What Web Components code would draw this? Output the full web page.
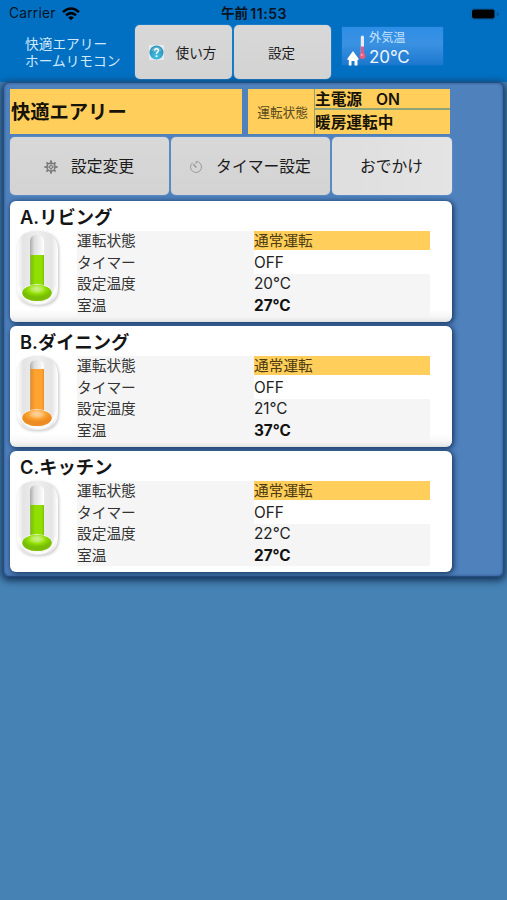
<!DOCTYPE html>
<html lang="ja">
<head>
<meta charset="utf-8">
<title>快適エアリー ホームリモコン</title>
<style>
html,body{margin:0;height:100%}
body{background:#4682b4;font-family:Inter,"Noto Sans CJK JP",sans-serif;color:#111;overflow:hidden}
</style>
</head>
<body>
<home-remote></home-remote>
<script>
const define = (name, html) => customElements.define(name, class extends HTMLElement {
  connectedCallback() {
    if (this.shadowRoot) return;
    const t = document.createElement('template');
    t.innerHTML = typeof html === 'function' ? html(this) : html;
    this.attachShadow({mode: 'open'}).append(t.content.cloneNode(true));
  }
});

define('status-bar', `<style>
:host{display:grid;grid-template-columns:1fr auto 1fr;align-items:center;height:25px;padding:2px 7px 0 9px;box-sizing:border-box;color:#07131f;font-size:13.8px;line-height:23px}
.l{display:flex;align-items:center;gap:6px;letter-spacing:.2px}
.t{font-weight:600;font-size:13.5px;letter-spacing:.1px;display:flex;gap:2px;margin-right:1px}
.t b{font-weight:600;font-size:14px;letter-spacing:.55px}
.r{display:flex;justify-content:flex-end}
svg{display:block}
</style>
<div class="l"><span>Carrier</span><svg width="18" height="14" viewBox="0 0 18 14" fill="none" stroke="#000" stroke-width="2.5"><path d="M1 5.1Q9-2 17 5.1M4 8.3Q9 4 14 8.3"/><path d="M9 13.2L6.2 10.4Q9 8.2 11.8 10.4Z" fill="#000" stroke="none"/></svg></div>
<div class="t"><span>午前</span><b>11:53</b></div>
<div class="r"><svg width="30" height="12" viewBox="0 0 30 12"><rect x=".5" y=".5" width="25.500" height="11" rx="3" fill="none" stroke="#0662ab"/><rect x="2" y="1.500" width="22.500" height="9" rx="2"/><path d="M27.300 4.200v4q1.500-.6 1.500-2t-1.500-2" fill="#054b82"/></svg></div>`);

define('push-button', `<style>
:host{display:flex;align-items:center;justify-content:center;box-sizing:border-box;border-radius:5px;background:linear-gradient(#d8d8d8,#d3d3d3);font-size:15.8px;line-height:24px;color:#1c1c1c;gap:13px;white-space:nowrap;box-shadow:0 0 1px #cde;padding-top:1px}
:host([small]){font-size:13.6px;gap:12px;padding-right:2px}
:host([light]){background:linear-gradient(90deg,#dedede,#e4e4e4)}
</style><slot name="icon"></slot><slot></slot>`);

const icons = {
  help: `<svg width="15" height="15" viewBox="0 0 15 15"><defs><radialGradient id="g" cy=".75"><stop stop-color="#47c8e8"/><stop offset="1" stop-color="#2d98be"/></radialGradient></defs><path fill="#e6ecee" d="M0 0h15v15H0z"/><circle cx="7.500" cy="7.500" r="7" fill="url(#g)"/><path d="M2 5.500Q7.500-2 13 5.500Q7.500 8 2 5.500" fill="#fff" opacity=".25"/><path d="M5.500 5.500Q5.600 3.800 7.500 3.800T9.500 5.500Q9.500 6.600 8.200 7.300Q7.500 7.800 7.500 9" fill="none" stroke="#fff" stroke-width="1.400"/><circle cx="7.500" cy="11.200" r=".9" fill="#fff"/></svg>`,
  gear: `<svg width="14" height="14" viewBox="-7 -7 14 14" fill="none" stroke="#777"><circle r="4.100" stroke-width="1.500"/><circle r="1.500" stroke-width="1.200"/><path d="M0-6.500V-1.500M0 6.500V1.500M-6.500 0H-1.500M6.500 0H1.500" stroke-width="1"/><path d="M-4.600-4.600L-3-3M4.600 4.600L3 3M4.600-4.600L3-3M-4.600 4.600L-3 3M0-6.500V-4.500M0 6.500V4.500M-6.500 0H-4.500M6.500 0H4.500" stroke-width="1.700"/></svg>`,
  timer: `<svg width="14" height="14" viewBox="-7 -7 14 14" fill="none" stroke="#999"><path d="M-3.400-4.300A5.500 5.500 0 1 0 0-5.500V-3.200" stroke-width="1"/><path d="M-2.700-2.800L.3.500" stroke-width="1.500"/></svg>`
};
define('line-icon', el => `<style>:host{display:block}svg{display:block}</style>${icons[el.getAttribute('name')]}`);

define('outdoor-temp', `<style>
:host{display:flex;box-sizing:border-box;width:101px;height:38px;background:linear-gradient(#2d8ee6,#3b91e1 45%,#1c78ce);color:#edf6ff;padding-left:5px;box-shadow:0 0 1px #3189d6}
svg{display:block;flex:none;overflow:visible}
.a{font-size:12.2px;line-height:15px;padding:3px 0 0;color:#c5e3ff}
.b{font-size:17px;line-height:21px;padding-top:2px;letter-spacing:-.1px}
</style>
<svg width="22" height="38" viewBox="0 0 22 38"><path d="M.5 31.500L6 24L11.500 31.500V33H10.500V38.500H7.500V34H4.500V38.500H1.800V33H.5Z" fill="#fff"/><rect x="13.800" y="8.500" width="3.200" height="20" rx="1.600" fill="#e6edff"/><path d="M13.800 19.500h3.200v7h-3.200z" fill="#d85b91"/><circle cx="15.400" cy="29" r="2.900" fill="#f25a77"/><circle cx="14.700" cy="27.900" r="1" fill="#ffb4c5"/></svg>
<div><div class="a">外気温</div><div class="b">20°C</div></div>`);

define('app-header', `<style>
:host{display:block;height:82px;background:#0270c2}
.row{display:grid;grid-template-columns:133px 97px 97px 102px;column-gap:2px}
.name{font-size:13.7px;line-height:16.500px;padding:11px 0 0 25px;color:#cfe9fc;white-space:nowrap}
push-button{height:54px}
outdoor-temp{margin:2px 0 0 9px}
</style>
<status-bar></status-bar>
<div class="row"><div class="name">快適エアリー<br>ホームリモコン</div>
<push-button small><line-icon slot="icon" name="help"></line-icon>使い方</push-button>
<push-button small>設定</push-button><outdoor-temp></outdoor-temp></div>`);

define('system-status', `<style>
:host{display:grid;grid-template-columns:232px 202px;column-gap:6px;height:45px;color:#161308}
.n,.s>*{background:#ffce5b}
.n{display:flex;align-items:center;font-size:19.300px;font-weight:700;padding:1px 0 0 1px;line-height:44px}
.s{display:grid;grid-template-columns:66px 1fr;grid-template-rows:19px 1fr;gap:1.500px 1px;background:#8fa374}
.k{grid-row:1/3;display:flex;align-items:center;justify-content:flex-end;font-size:12.700px;color:#5a4a20;padding-right:6px}
.v{display:flex;align-items:center;font-size:15.700px;font-weight:700;white-space:pre;padding-top:1px;line-height:17px}
.on{font-weight:600;margin-left:14px}
</style>
<div class="n">快適エアリー</div><div class="s"><div class="k">運転状態</div><div class="v">主電源<span class="on">ON</span></div><div class="v">暖房運転中</div></div>`);

define('thermo-meter', el => {
  const hot = el.hasAttribute('hot'), c = hot ? '#fca332' : '#91df00', d = hot ? '#ec8c22' : '#79bd06', y = hot ? 14 : 25;
  return `<style>:host{display:block}svg{display:block;overflow:visible}</style>
<svg width="50" height="80" viewBox="0 0 50 80"><defs>
<linearGradient id="c"><stop stop-color="#fff"/><stop offset=".15" stop-color="#e4e4e4"/><stop offset=".5" stop-color="#eee"/><stop offset=".85" stop-color="#e5e5e5"/><stop offset="1" stop-color="#fff"/></linearGradient>
<linearGradient id="t"><stop stop-color="${d}"/><stop offset=".35" stop-color="${c}"/><stop offset=".85" stop-color="${c}"/><stop offset="1" stop-color="${d}"/></linearGradient>
<linearGradient id="w"><stop stop-color="#aaa"/><stop offset=".3" stop-color="#ddd"/><stop offset="1" stop-color="#fff"/></linearGradient>
<radialGradient id="b" cy=".25"><stop stop-color="#fff" stop-opacity=".5"/><stop offset=".6" stop-color="${c}"/><stop offset="1" stop-color="${d}"/></radialGradient></defs>
<path d="M3 19Q3 1 23 1T44 19V57Q44 75 23 75T3 57Z" fill="url(#c)" style="filter:drop-shadow(1px 1px 1.500px #c4c4c4)"/>
<path d="M5 57Q8 72 23 73T42 57" fill="none" stroke="#fff" stroke-width="2" opacity=".8"/>
<path d="M16 11Q16 5 23 5T30 11V58H16Z" fill="url(#w)"/>
<path d="M16.500 ${y}H30V58H16.500Z" fill="url(#t)"/>
<ellipse cx="23" cy="63" rx="15.500" ry="9" fill="#fff" opacity=".7"/>
<ellipse cx="23" cy="63" rx="14.600" ry="8" fill="${c}"/><ellipse cx="23" cy="63" rx="14.600" ry="8" fill="url(#b)"/></svg>`;
});

define('room-card', el => `<style>
:host{display:block;box-sizing:border-box;height:121px;border-radius:6px;background:linear-gradient(#fff 108px,#f7f7f7 115px,#e6e6e6);box-shadow:1px 1px 5px 1px #1c3c65}
:host([last]){background:#fff}
h2{margin:0;padding:3px 0 0 10px;height:28px;box-sizing:border-box;font-size:18.300px;line-height:26px;font-weight:600;color:#151515}
.m{display:grid;grid-template-columns:67px 1fr;padding-right:22px}
thermo-meter{margin:1px 0 0 4px}
dl{margin:2px 0 0;display:grid;grid-template-columns:177px 176px;grid-template-rows:repeat(3,21.600px) 20.500px;font-size:14.700px;color:#333}
dt,dd{margin:0;line-height:20px;background:#f5f5f5}
dd{font-size:15.300px;color:#222}
.y{background:#ffce5b;height:19px;font-size:14.700px;color:#4d3c12}
.w{background:#fff}
.b{font-weight:700;color:#111}
</style>
<h2><slot></slot></h2>
<div class="m"><thermo-meter ${el.hasAttribute('hot') ? 'hot' : ''}></thermo-meter>
<dl><dt>運転状態</dt><dd class="y">通常運転</dd><dt>タイマー</dt><dd class="w">OFF</dd><dt>設定温度</dt><dd>${el.getAttribute('target')}</dd><dt>室温</dt><dd class="b">${el.getAttribute('current')}</dd></dl></div>`);

define('home-remote', `<style>
:host{display:block}
main{margin:0 3px;box-sizing:border-box;height:495px;border:1px solid #244d84;border-radius:6px;background:#4f81bd;padding:6px 0 0 6px;box-shadow:0 2px 7px 2px #17385d,inset 0 0 3px #244d84}
.btns{display:grid;grid-template-columns:159px 159px 120px;column-gap:2px;margin:3px 0 6px -.5px}
.btns push-button{height:58px}
.rooms{width:442px;display:grid;row-gap:4px}
</style>
<app-header></app-header>
<main>
<system-status></system-status>
<div class="btns"><push-button><line-icon slot="icon" name="gear"></line-icon>設定変更</push-button><push-button><line-icon slot="icon" name="timer"></line-icon>タイマー設定</push-button><push-button light>おでかけ</push-button></div>
<div class="rooms"><room-card target="20°C" current="27°C">A.リビング</room-card><room-card hot target="21°C" current="37°C">B.ダイニング</room-card><room-card last target="22°C" current="27°C">C.キッチン</room-card></div>
</main>`);
</script>
</body>
</html>
